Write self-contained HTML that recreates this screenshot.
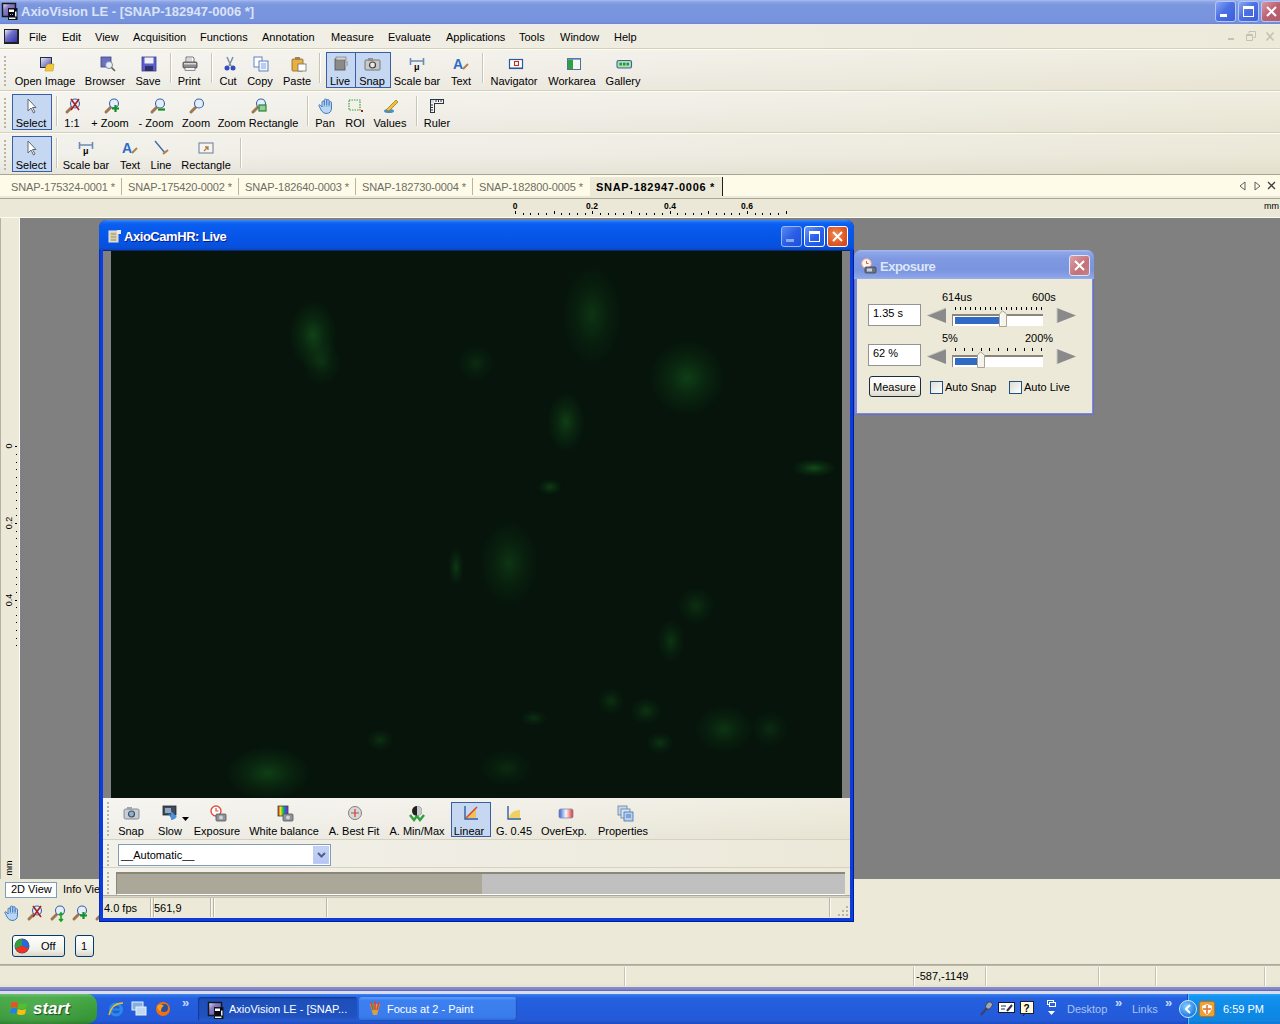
<!DOCTYPE html><html><head><meta charset="utf-8"><style>
*{margin:0;padding:0;box-sizing:border-box}
html,body{width:1280px;height:1024px;overflow:hidden;background:#ece9d8;font-family:"Liberation Sans",sans-serif;font-size:11px;color:#000;position:relative}
.a{position:absolute}
.t{position:absolute;white-space:nowrap;line-height:13px}
.lbl{position:absolute;white-space:nowrap;line-height:13px;text-align:center}
svg{position:absolute;overflow:visible}
#title{left:0;top:0;width:1280px;height:25px;background:linear-gradient(#a6bbee 0px,#8aa3e4 2px,#7b96df 5px,#7995df 60%,#7792dc 88%,#6f84c8 24px,#e6ebfa 24px)}
#menubar{left:0;top:25px;width:1280px;height:24px;background:linear-gradient(90deg,#f2f1ea,#efede2 45%,#edeada);border-bottom:1px solid #d4d0bf}
.tb{left:0;width:1280px;background:linear-gradient(rgba(255,255,255,.2),rgba(255,255,255,0) 50%,rgba(110,100,50,.04)),linear-gradient(90deg,#f3f2ed,#f0eee6 45%,#ece9d9);border-top:1px solid #fdfdf0;border-bottom:1px solid #d4d0bf}
.grip{position:absolute;left:4px;width:2px;background:repeating-linear-gradient(#b9b59f 0 2px,transparent 2px 4px)}
.sep{position:absolute;width:2px;border-left:1px solid #c9c5b3;border-right:1px solid #fff}
.pr{position:absolute;background:#c5d7f1;border:1px solid #3a5ea4}
</style></head><body>
<div id="title" class="a">
<svg style="left:1px;top:2px" width="17" height="18" viewBox="0 0 17 18"><defs><linearGradient id="tg" x1="0" y1="0" x2="1" y2="1"><stop offset="0" stop-color="#f0f0ff"/><stop offset=".35" stop-color="#8a7cc0"/><stop offset="1" stop-color="#5a48a8"/></linearGradient></defs><rect x="1.5" y="1.5" width="13" height="13" fill="url(#tg)" stroke="#101820" stroke-width="1.5"/><rect x="7.5" y="6.5" width="8.5" height="11" fill="#0a0a14" stroke="#101820"/><rect x="8" y="7.5" width="5" height="2.5" fill="#fff"/><rect x="8" y="15.5" width="6.5" height="1.5" fill="#f0f0e0"/><rect x="14" y="9.5" width="1.5" height="5" fill="#f0f0f0"/><path d="M9 12.5h1M11 12.5h1" stroke="#a0a8c0" stroke-width="1"/></svg>
<div class="t" style="left:21px;top:5px;font-weight:bold;font-size:13px;color:#d9e3f8">AxioVision LE - [SNAP-182947-0006 *]</div>
<div class="a" style="left:1215px;top:1px;width:21px;height:21px;border:1px solid #b4c6f4;border-radius:3px;background:linear-gradient(135deg,#8aa6f2,#4c70e4 45%,#3c5fd9)"></div>
<div class="a" style="left:1238px;top:1px;width:21px;height:21px;border:1px solid #b4c6f4;border-radius:3px;background:linear-gradient(135deg,#8aa6f2,#4c70e4 45%,#3c5fd9)"></div>
<div class="a" style="left:1261px;top:1px;width:21px;height:21px;border:1px solid #b4c6f4;border-radius:3px;background:linear-gradient(135deg,#d896a4,#bc6070 50%,#b45a6c)"></div>
<div class="a" style="left:1220px;top:14px;width:7px;height:3px;background:#fff"></div>
<div class="a" style="left:1243px;top:6px;width:11px;height:11px;border:1px solid #fff;border-top-width:3px"></div>
<svg style="left:1265px;top:5px" width="15" height="15"><path d="M2 2 L11 11 M11 2 L2 11" stroke="#fff" stroke-width="2"/></svg>
</div>
<div id="menubar" class="a">
<div class="a" style="left:4px;top:4px;width:15px;height:15px;border:1px solid #202020;border-right-width:2px;border-bottom-width:2px;background:linear-gradient(135deg,#e8e8f8,#7070c8 40%,#3030a8)"></div>
<div class="t" style="left:29px;top:6px">File</div>
<div class="t" style="left:62px;top:6px">Edit</div>
<div class="t" style="left:95px;top:6px">View</div>
<div class="t" style="left:133px;top:6px">Acquisition</div>
<div class="t" style="left:200px;top:6px">Functions</div>
<div class="t" style="left:262px;top:6px">Annotation</div>
<div class="t" style="left:331px;top:6px">Measure</div>
<div class="t" style="left:388px;top:6px">Evaluate</div>
<div class="t" style="left:446px;top:6px">Applications</div>
<div class="t" style="left:519px;top:6px">Tools</div>
<div class="t" style="left:560px;top:6px">Window</div>
<div class="t" style="left:614px;top:6px">Help</div>
<div class="a" style="left:1228px;top:13px;width:6px;height:2px;background:#c4c2b6"></div>
<svg style="left:1246px;top:6px" width="10" height="10"><path d="M3 2.5 V0.5 H9.5 V6.5 H7.5 M0.5 3.5 H6.5 V9.5 H0.5 Z M0.5 4.5 H6.5" stroke="#c4c2b6" stroke-width="1" fill="none"/></svg>
<svg style="left:1266px;top:7px" width="8" height="9"><path d="M0.5 0.5 L7.5 8.5 M7.5 0.5 L0.5 8.5" stroke="#c4c2b6" stroke-width="1.6"/></svg>
</div>
<div class="a tb" style="top:49px;height:42px"><div class="grip" style="top:6px;height:32px"></div></div>
<div class="a tb" style="top:91px;height:42px"><div class="grip" style="top:6px;height:32px"></div></div>
<div class="a tb" style="top:133px;height:41px;border-bottom:none;background:linear-gradient(rgba(255,255,255,.1),rgba(255,255,255,0) 50%,rgba(110,100,50,.07)),linear-gradient(90deg,#f1f0ea,#efede4 45%,#ebe8d8)"><div class="grip" style="top:6px;height:32px"></div></div>
<svg width="0" height="0" style="position:absolute"><defs><linearGradient id="gp" x1="0" y1="0" x2="1" y2="1"><stop offset="0" stop-color="#e8e8f8"/><stop offset="1" stop-color="#4848a8"/></linearGradient></defs></svg>
<svg style="left:39px;top:56px" width="16" height="16" viewBox="0 0 16 16"><rect x="1" y="1" width="12" height="11" fill="#2a2a40"/><rect x="2" y="2" width="10" height="9" fill="url(#gp)"/><path d="M7 10 L9 8 L15 8 L14 15 L6 15 Z" fill="#f2c83a" stroke="#c99a20" stroke-width="0.6"/></svg>
<div class="lbl" style="left:-15px;top:75px;width:120px;">Open Image</div>
<svg style="left:100px;top:56px" width="16" height="16" viewBox="0 0 16 16"><rect x="1" y="1" width="10" height="10" fill="#6a70c0" stroke="#404080" stroke-width="0.8"/><circle cx="9" cy="9" r="3.5" fill="#e6eef8" stroke="#7a8aa8" stroke-width="1"/><line x1="11.5" y1="11.5" x2="15" y2="15" stroke="#6a5a4a" stroke-width="1.6"/></svg>
<div class="lbl" style="left:45px;top:75px;width:120px;">Browser</div>
<svg style="left:141px;top:56px" width="16" height="16" viewBox="0 0 16 16"><rect x="1" y="1" width="14" height="14" fill="#5a5ec8" stroke="#3a3a90" stroke-width="0.8"/><rect x="3.5" y="1.5" width="9" height="6" fill="#f0f0f8"/><rect x="4" y="10" width="8" height="5" fill="#30306a"/></svg>
<div class="lbl" style="left:88px;top:75px;width:120px;">Save</div>
<svg style="left:182px;top:56px" width="16" height="16" viewBox="0 0 16 16"><path d="M4 1 H11 L12 2 V7 H4 Z" fill="#fff" stroke="#505050" stroke-width="0.8"/><path d="M5 3h5M5 5h5" stroke="#9090a0" stroke-width="0.7"/><rect x="1" y="6" width="14" height="6" rx="1" fill="#8c8c8c" stroke="#3c3c3c" stroke-width="0.8"/><rect x="2" y="7" width="12" height="1.5" fill="#d8d8d8"/><rect x="3" y="11.5" width="10" height="3" fill="#f0f0f0" stroke="#505050" stroke-width="0.6"/></svg>
<div class="lbl" style="left:129px;top:75px;width:120px;">Print</div>
<svg style="left:222px;top:56px" width="16" height="16" viewBox="0 0 16 16"><path d="M5 1 L9 10 M11 1 L7 10" stroke="#8090a0" stroke-width="1.5"/><circle cx="5" cy="12" r="2.5" fill="#3050c0"/><circle cx="11" cy="12" r="2.5" fill="#3050c0"/></svg>
<div class="lbl" style="left:168px;top:75px;width:120px;">Cut</div>
<svg style="left:253px;top:56px" width="16" height="16" viewBox="0 0 16 16"><rect x="1" y="1" width="8" height="10" fill="#fff" stroke="#5078b8" stroke-width="0.9"/><rect x="6" y="5" width="9" height="10" fill="#f0f4ff" stroke="#5078b8" stroke-width="0.9"/><path d="M8 8h5M8 10h5M8 12h5" stroke="#7090c8" stroke-width="0.8"/></svg>
<div class="lbl" style="left:200px;top:75px;width:120px;">Copy</div>
<svg style="left:291px;top:56px" width="16" height="16" viewBox="0 0 16 16"><rect x="1" y="3" width="11" height="12" rx="1" fill="#e8b040" stroke="#906020" stroke-width="0.8"/><rect x="4" y="1" width="5" height="3" fill="#a08060"/><rect x="7" y="8" width="8" height="7" fill="#fff" stroke="#707070" stroke-width="0.8"/></svg>
<div class="lbl" style="left:237px;top:75px;width:120px;">Paste</div>
<div class="sep" style="left:170px;top:53px;height:30px"></div>
<div class="sep" style="left:211px;top:53px;height:30px"></div>
<div class="sep" style="left:319px;top:53px;height:30px"></div>
<div class="pr" style="left:326px;top:52px;width:30px;height:36px"></div>
<div class="pr" style="left:355px;top:52px;width:36px;height:36px"></div>
<svg style="left:333px;top:56px" width="16" height="16" viewBox="0 0 16 16"><rect x="2" y="3" width="10" height="11" fill="#8a8a8a" stroke="#505050" stroke-width="0.8"/><rect x="3" y="1" width="10" height="3" fill="#d0d0d0" stroke="#707070" stroke-width="0.6"/><rect x="12" y="5" width="3" height="5" fill="#b0b0b0"/></svg>
<div class="lbl" style="left:280px;top:75px;width:120px;">Live</div>
<svg style="left:364px;top:56px" width="16" height="16" viewBox="0 0 16 16"><rect x="1" y="4" width="15" height="10" rx="1" fill="#c8c8c8" stroke="#606060" stroke-width="0.8"/><rect x="4" y="2" width="5" height="3" fill="#909090"/><circle cx="8.5" cy="9" r="3" fill="#e8e8e8" stroke="#404040" stroke-width="1.2"/></svg>
<div class="lbl" style="left:312px;top:75px;width:120px;">Snap</div>
<svg style="left:409px;top:56px" width="16" height="16" viewBox="0 0 16 16"><path d="M1.5 2 V9 M14.5 2 V9 M1.5 5 H14.5" stroke="#6a8ab8" stroke-width="1.6"/><text x="5" y="13.5" font-size="9" font-weight="bold" font-family="Liberation Sans" fill="#000">μ</text></svg>
<div class="lbl" style="left:357px;top:75px;width:120px;">Scale bar</div>
<svg style="left:453px;top:56px" width="16" height="16" viewBox="0 0 16 16"><text x="0" y="13" font-size="14" font-weight="bold" font-family="Liberation Sans" fill="#2c6cc8">A</text><line x1="10" y1="13" x2="15" y2="8" stroke="#b08050" stroke-width="2"/></svg>
<div class="lbl" style="left:401px;top:75px;width:120px;">Text</div>
<div class="sep" style="left:482px;top:53px;height:30px"></div>
<svg style="left:508px;top:56px" width="16" height="16" viewBox="0 0 16 16"><rect x="1.5" y="3.5" width="13" height="9" fill="#fff" stroke="#2a5aa0" stroke-width="1.2"/><rect x="1" y="11.5" width="14" height="1.5" fill="#2a5aa0"/><rect x="6.5" y="5.5" width="4" height="4" fill="none" stroke="#c03020" stroke-width="1.1"/></svg>
<div class="lbl" style="left:454px;top:75px;width:120px;">Navigator</div>
<svg style="left:566px;top:56px" width="16" height="16" viewBox="0 0 16 16"><rect x="1.5" y="2.5" width="13" height="11" fill="#f4f4f4" stroke="#50709c" stroke-width="1"/><rect x="1" y="2" width="14" height="1.6" fill="#4a78b8"/><rect x="2" y="3.5" width="5" height="9.5" fill="#30a040"/></svg>
<div class="lbl" style="left:512px;top:75px;width:120px;">Workarea</div>
<svg style="left:616px;top:56px" width="16" height="16" viewBox="0 0 16 16"><rect x="1" y="4.5" width="14.5" height="7.5" rx="1.5" fill="#a8e0a8" stroke="#3a64a8" stroke-width="1.1"/><rect x="3.5" y="6.8" width="2.4" height="2.6" fill="#2a8a3a"/><rect x="7" y="6.8" width="2.4" height="2.6" fill="#2a8a3a"/><rect x="10.5" y="6.8" width="2.4" height="2.6" fill="#2a8a3a"/></svg>
<div class="lbl" style="left:563px;top:75px;width:120px;">Gallery</div>
<div class="pr" style="left:12px;top:94px;width:40px;height:36px"></div>
<svg style="left:24px;top:98px" width="16" height="16" viewBox="0 0 16 16"><path d="M4 1 L4 13 L7 10 L9.5 15 L11 14 L8.5 9.5 L12 9.5 Z" fill="#fff" stroke="#606870" stroke-width="1"/></svg>
<div class="lbl" style="left:-29px;top:117px;width:120px;">Select</div>
<div class="sep" style="left:56px;top:96px;height:30px"></div>
<svg style="left:65px;top:98px" width="16" height="16" viewBox="0 0 16 16"><line x1="2" y1="14" x2="7" y2="9" stroke="#a07850" stroke-width="3" stroke-linecap="round"/><circle cx="10" cy="5.5" r="4.5" fill="#e4eef8" stroke="#3a64a8" stroke-width="1.1"/><path d="M6 1 L14 12 M14 1 L6 12" stroke="#a82020" stroke-width="1.6"/></svg>
<div class="lbl" style="left:12px;top:117px;width:120px;">1:1</div>
<svg style="left:104px;top:98px" width="16" height="16" viewBox="0 0 16 16"><line x1="2" y1="14" x2="7" y2="9" stroke="#a07850" stroke-width="3" stroke-linecap="round"/><circle cx="10" cy="5.5" r="4.5" fill="#e4eef8" stroke="#3a64a8" stroke-width="1.1"/><path d="M11.5 7 V14 M8 10.5 H15" stroke="#109020" stroke-width="2.2"/></svg>
<div class="lbl" style="left:50px;top:117px;width:120px;">+ Zoom</div>
<svg style="left:150px;top:98px" width="16" height="16" viewBox="0 0 16 16"><line x1="2" y1="14" x2="7" y2="9" stroke="#a07850" stroke-width="3" stroke-linecap="round"/><circle cx="10" cy="5.5" r="4.5" fill="#e4eef8" stroke="#3a64a8" stroke-width="1.1"/><path d="M8 11.5 H15" stroke="#109020" stroke-width="2.2"/></svg>
<div class="lbl" style="left:96px;top:117px;width:120px;">- Zoom</div>
<svg style="left:189px;top:98px" width="16" height="16" viewBox="0 0 16 16"><line x1="2" y1="14" x2="7" y2="9" stroke="#a07850" stroke-width="3" stroke-linecap="round"/><circle cx="10" cy="5.5" r="4.5" fill="#e4eef8" stroke="#3a64a8" stroke-width="1.1"/></svg>
<div class="lbl" style="left:136px;top:117px;width:120px;">Zoom</div>
<svg style="left:251px;top:98px" width="16" height="16" viewBox="0 0 16 16"><line x1="2" y1="14" x2="7" y2="9" stroke="#a07850" stroke-width="3" stroke-linecap="round"/><circle cx="10" cy="5.5" r="4.5" fill="#e4eef8" stroke="#3a64a8" stroke-width="1.1"/><rect x="8" y="7" width="7" height="6" fill="#90d090" stroke="#308040" stroke-width="1.2"/></svg>
<div class="lbl" style="left:198px;top:117px;width:120px;">Zoom Rectangle</div>
<svg style="left:318px;top:98px" width="16" height="16" viewBox="0 0 16 16"><g fill="#b8d6f6" stroke="#3c70b8" stroke-width="0.9"><rect x="4" y="3" width="2.4" height="8" rx="1.2"/><rect x="6.4" y="1" width="2.4" height="9" rx="1.2"/><rect x="8.8" y="1.6" width="2.4" height="9" rx="1.2"/><rect x="11.2" y="3.6" width="2.3" height="7" rx="1.15"/><path d="M4.2 9 L2.2 7 Q1 6.2 0.8 7.4 L3 12 Q5 15.5 8 15.5 Q13.5 15.5 13.5 10 V8.5 L4.2 8.5 Z"/></g><path d="M4.6 8.2 H13" stroke="#b8d6f6" stroke-width="1.2"/></svg>
<div class="lbl" style="left:265px;top:117px;width:120px;">Pan</div>
<svg style="left:348px;top:98px" width="16" height="16" viewBox="0 0 16 16"><rect x="1" y="2" width="11" height="10" fill="none" stroke="#40a040" stroke-width="1.2" stroke-dasharray="1.5 1"/><rect x="13" y="12" width="2" height="2" fill="#a01818"/></svg>
<div class="lbl" style="left:295px;top:117px;width:120px;">ROI</div>
<svg style="left:383px;top:98px" width="16" height="16" viewBox="0 0 16 16"><ellipse cx="6" cy="13" rx="5" ry="2" fill="#4a90c8"/><path d="M3 12 L13 2 L15 4 L6 13 Z" fill="#f0c040" stroke="#a07820" stroke-width="0.8"/></svg>
<div class="lbl" style="left:330px;top:117px;width:120px;">Values</div>
<svg style="left:429px;top:98px" width="16" height="16" viewBox="0 0 16 16"><path d="M1 1 H15 V6 H6 V15 H1 Z" fill="#2c343c"/><path d="M2 2 H14 V5 H5 V14 H2 Z" fill="#f4f4f4"/><path d="M7 2v2M9.5 2v2M12 2v2M2 7h2M2 9.5h2M2 12h2" stroke="#2c343c" stroke-width="1"/><rect x="2" y="2" width="3" height="3" fill="#d8dce0"/></svg>
<div class="lbl" style="left:377px;top:117px;width:120px;">Ruler</div>
<div class="sep" style="left:307px;top:96px;height:30px"></div>
<div class="sep" style="left:416px;top:96px;height:30px"></div>
<div class="pr" style="left:12px;top:136px;width:40px;height:36px"></div>
<svg style="left:24px;top:140px" width="16" height="16" viewBox="0 0 16 16"><path d="M4 1 L4 13 L7 10 L9.5 15 L11 14 L8.5 9.5 L12 9.5 Z" fill="#fff" stroke="#606870" stroke-width="1"/></svg>
<div class="lbl" style="left:-29px;top:159px;width:120px;">Select</div>
<div class="sep" style="left:56px;top:138px;height:30px"></div>
<svg style="left:78px;top:140px" width="16" height="16" viewBox="0 0 16 16"><path d="M1.5 2 V9 M14.5 2 V9 M1.5 5 H14.5" stroke="#6a8ab8" stroke-width="1.6"/><text x="5" y="13.5" font-size="9" font-weight="bold" font-family="Liberation Sans" fill="#000">μ</text></svg>
<div class="lbl" style="left:26px;top:159px;width:120px;">Scale bar</div>
<svg style="left:122px;top:140px" width="16" height="16" viewBox="0 0 16 16"><text x="0" y="13" font-size="14" font-weight="bold" font-family="Liberation Sans" fill="#2c6cc8">A</text><line x1="10" y1="13" x2="15" y2="8" stroke="#b08050" stroke-width="2"/></svg>
<div class="lbl" style="left:70px;top:159px;width:120px;">Text</div>
<svg style="left:153px;top:140px" width="16" height="16" viewBox="0 0 16 16"><line x1="2" y1="1" x2="12" y2="13" stroke="#3c64a8" stroke-width="1.3"/><line x1="10" y1="14" x2="15" y2="10" stroke="#b08050" stroke-width="2.2"/></svg>
<div class="lbl" style="left:101px;top:159px;width:120px;">Line</div>
<svg style="left:198px;top:140px" width="16" height="16" viewBox="0 0 16 16"><rect x="1" y="3" width="14" height="10" fill="#f4f4f4" stroke="#8090a0" stroke-width="1.2"/><path d="M6 11 L10 7 M7 7 H10 V10" stroke="#b08040" stroke-width="1.3" fill="none"/></svg>
<div class="lbl" style="left:146px;top:159px;width:120px;">Rectangle</div>
<div class="sep" style="left:240px;top:138px;height:30px"></div>
<div class="a" style="left:0;top:174px;width:1280px;height:25px;background:linear-gradient(#fefbe9 85%,#fbf9ee 85%,#fbf9ee 92%,#ece9d9 92%);border-top:1px solid #a8a594;border-bottom:1px solid #aaa792"></div>
<div class="t" style="left:11px;top:181px;color:#6e6d64;letter-spacing:-0.1px">SNAP-175324-0001 *</div>
<div class="t" style="left:128px;top:181px;color:#6e6d64;letter-spacing:-0.1px">SNAP-175420-0002 *</div>
<div class="t" style="left:245px;top:181px;color:#6e6d64;letter-spacing:-0.1px">SNAP-182640-0003 *</div>
<div class="t" style="left:362px;top:181px;color:#6e6d64;letter-spacing:-0.1px">SNAP-182730-0004 *</div>
<div class="t" style="left:479px;top:181px;color:#6e6d64;letter-spacing:-0.1px">SNAP-182800-0005 *</div>
<div class="a" style="left:121px;top:178px;width:1px;height:17px;background:#b8b5a6"></div>
<div class="a" style="left:238px;top:178px;width:1px;height:17px;background:#b8b5a6"></div>
<div class="a" style="left:355px;top:178px;width:1px;height:17px;background:#b8b5a6"></div>
<div class="a" style="left:472px;top:178px;width:1px;height:17px;background:#b8b5a6"></div>
<div class="a" style="left:590px;top:177px;width:132px;height:21px;background:#ece9d8"></div>
<div class="t" style="left:596px;top:181px;font-weight:bold;letter-spacing:0.7px">SNAP-182947-0006 *</div>
<div class="a" style="left:722px;top:177px;width:1px;height:19px;background:#202020"></div>
<svg style="left:1239px;top:181px" width="8" height="10"><path d="M6 1 L1 5 L6 9 Z" fill="none" stroke="#606060" stroke-width="1"/></svg>
<svg style="left:1254px;top:181px" width="8" height="10"><path d="M1 1 L6 5 L1 9 Z" fill="none" stroke="#606060" stroke-width="1"/></svg>
<svg style="left:1267px;top:181px" width="9" height="9"><path d="M1 1 L8 8 M8 1 L1 8" stroke="#404040" stroke-width="1.3"/></svg>
<div class="a" style="left:0;top:199px;width:1280px;height:19px;background:#ebe8d8;border-bottom:1px solid #fdfcf4"></div>
<div class="a" style="left:515px;top:211px;width:1px;height:3px;background:#000"></div><div class="a" style="left:523px;top:213px;width:1px;height:2px;background:#000"></div><div class="a" style="left:530px;top:213px;width:1px;height:2px;background:#000"></div><div class="a" style="left:538px;top:213px;width:1px;height:2px;background:#000"></div><div class="a" style="left:546px;top:213px;width:1px;height:2px;background:#000"></div><div class="a" style="left:554px;top:211px;width:1px;height:3px;background:#000"></div><div class="a" style="left:561px;top:213px;width:1px;height:2px;background:#000"></div><div class="a" style="left:569px;top:213px;width:1px;height:2px;background:#000"></div><div class="a" style="left:577px;top:213px;width:1px;height:2px;background:#000"></div><div class="a" style="left:585px;top:213px;width:1px;height:2px;background:#000"></div><div class="a" style="left:592px;top:211px;width:1px;height:3px;background:#000"></div><div class="a" style="left:600px;top:213px;width:1px;height:2px;background:#000"></div><div class="a" style="left:608px;top:213px;width:1px;height:2px;background:#000"></div><div class="a" style="left:615px;top:213px;width:1px;height:2px;background:#000"></div><div class="a" style="left:623px;top:213px;width:1px;height:2px;background:#000"></div><div class="a" style="left:631px;top:211px;width:1px;height:3px;background:#000"></div><div class="a" style="left:639px;top:213px;width:1px;height:2px;background:#000"></div><div class="a" style="left:646px;top:213px;width:1px;height:2px;background:#000"></div><div class="a" style="left:654px;top:213px;width:1px;height:2px;background:#000"></div><div class="a" style="left:662px;top:213px;width:1px;height:2px;background:#000"></div><div class="a" style="left:670px;top:211px;width:1px;height:3px;background:#000"></div><div class="a" style="left:677px;top:213px;width:1px;height:2px;background:#000"></div><div class="a" style="left:685px;top:213px;width:1px;height:2px;background:#000"></div><div class="a" style="left:693px;top:213px;width:1px;height:2px;background:#000"></div><div class="a" style="left:701px;top:213px;width:1px;height:2px;background:#000"></div><div class="a" style="left:708px;top:211px;width:1px;height:3px;background:#000"></div><div class="a" style="left:716px;top:213px;width:1px;height:2px;background:#000"></div><div class="a" style="left:724px;top:213px;width:1px;height:2px;background:#000"></div><div class="a" style="left:731px;top:213px;width:1px;height:2px;background:#000"></div><div class="a" style="left:739px;top:213px;width:1px;height:2px;background:#000"></div><div class="a" style="left:747px;top:211px;width:1px;height:3px;background:#000"></div><div class="a" style="left:755px;top:213px;width:1px;height:2px;background:#000"></div><div class="a" style="left:762px;top:213px;width:1px;height:2px;background:#000"></div><div class="a" style="left:770px;top:213px;width:1px;height:2px;background:#000"></div><div class="a" style="left:778px;top:213px;width:1px;height:2px;background:#000"></div><div class="a" style="left:786px;top:211px;width:1px;height:3px;background:#000"></div>
<div class="t" style="left:495px;width:40px;text-align:center;top:202px;font-size:8.5px;font-weight:bold;line-height:9px">0</div>
<div class="t" style="left:572px;width:40px;text-align:center;top:202px;font-size:8.5px;font-weight:bold;line-height:9px">0.2</div>
<div class="t" style="left:650px;width:40px;text-align:center;top:202px;font-size:8.5px;font-weight:bold;line-height:9px">0.4</div>
<div class="t" style="left:727px;width:40px;text-align:center;top:202px;font-size:8.5px;font-weight:bold;line-height:9px">0.6</div>
<div class="t" style="left:1264px;top:201px;font-size:9px;line-height:10px">mm</div>
<div class="a" style="left:20px;top:218px;width:1260px;height:661px;background:#808080"></div>
<div class="a" style="left:0;top:218px;width:20px;height:661px;background:#ece9d8;border-left:1px solid #b4b1a2;border-right:1px solid #fdfcf4"></div>
<div class="a" style="left:15px;top:446px;width:2px;height:1px;background:#000"></div><div class="a" style="left:16px;top:454px;width:1px;height:1px;background:#000"></div><div class="a" style="left:16px;top:462px;width:1px;height:1px;background:#000"></div><div class="a" style="left:16px;top:469px;width:1px;height:1px;background:#000"></div><div class="a" style="left:16px;top:477px;width:1px;height:1px;background:#000"></div><div class="a" style="left:16px;top:485px;width:1px;height:1px;background:#000"></div><div class="a" style="left:16px;top:492px;width:1px;height:1px;background:#000"></div><div class="a" style="left:16px;top:500px;width:1px;height:1px;background:#000"></div><div class="a" style="left:16px;top:508px;width:1px;height:1px;background:#000"></div><div class="a" style="left:16px;top:515px;width:1px;height:1px;background:#000"></div><div class="a" style="left:15px;top:523px;width:2px;height:1px;background:#000"></div><div class="a" style="left:16px;top:531px;width:1px;height:1px;background:#000"></div><div class="a" style="left:16px;top:538px;width:1px;height:1px;background:#000"></div><div class="a" style="left:16px;top:546px;width:1px;height:1px;background:#000"></div><div class="a" style="left:16px;top:554px;width:1px;height:1px;background:#000"></div><div class="a" style="left:16px;top:561px;width:1px;height:1px;background:#000"></div><div class="a" style="left:16px;top:569px;width:1px;height:1px;background:#000"></div><div class="a" style="left:16px;top:577px;width:1px;height:1px;background:#000"></div><div class="a" style="left:16px;top:584px;width:1px;height:1px;background:#000"></div><div class="a" style="left:16px;top:592px;width:1px;height:1px;background:#000"></div><div class="a" style="left:15px;top:600px;width:2px;height:1px;background:#000"></div><div class="a" style="left:16px;top:607px;width:1px;height:1px;background:#000"></div><div class="a" style="left:16px;top:615px;width:1px;height:1px;background:#000"></div><div class="a" style="left:16px;top:622px;width:1px;height:1px;background:#000"></div><div class="a" style="left:16px;top:630px;width:1px;height:1px;background:#000"></div><div class="a" style="left:16px;top:638px;width:1px;height:1px;background:#000"></div><div class="a" style="left:16px;top:645px;width:1px;height:1px;background:#000"></div>
<div class="t" style="left:-11px;top:441px;width:40px;text-align:center;font-size:9px;line-height:10px;transform:rotate(-90deg)">0</div>
<div class="t" style="left:-11px;top:518px;width:40px;text-align:center;font-size:9px;line-height:10px;transform:rotate(-90deg)">0.2</div>
<div class="t" style="left:-11px;top:595px;width:40px;text-align:center;font-size:9px;line-height:10px;transform:rotate(-90deg)">0.4</div>
<div class="t" style="left:-11px;top:863px;width:40px;text-align:center;font-size:9px;line-height:10px;transform:rotate(-90deg)">mm</div>
<div class="a" style="left:5px;top:882px;width:52px;height:16px;background:#fff;border:1px solid #7f9db9"></div>
<div class="t" style="left:11px;top:883px">2D View</div>
<div class="t" style="left:63px;top:883px">Info View</div>
<svg style="left:4px;top:905px" width="16" height="16" viewBox="0 0 16 16"><g fill="#b8d6f6" stroke="#3c70b8" stroke-width="0.9"><rect x="4" y="3" width="2.4" height="8" rx="1.2"/><rect x="6.4" y="1" width="2.4" height="9" rx="1.2"/><rect x="8.8" y="1.6" width="2.4" height="9" rx="1.2"/><rect x="11.2" y="3.6" width="2.3" height="7" rx="1.15"/><path d="M4.2 9 L2.2 7 Q1 6.2 0.8 7.4 L3 12 Q5 15.5 8 15.5 Q13.5 15.5 13.5 10 V8.5 L4.2 8.5 Z"/></g><path d="M4.6 8.2 H13" stroke="#b8d6f6" stroke-width="1.2"/></svg>
<svg style="left:27px;top:905px" width="16" height="16" viewBox="0 0 16 16"><line x1="2" y1="14" x2="7" y2="9" stroke="#a07850" stroke-width="3" stroke-linecap="round"/><circle cx="10" cy="5.5" r="4.5" fill="#e4eef8" stroke="#3a64a8" stroke-width="1.1"/><path d="M6 1 L14 12 M14 1 L6 12" stroke="#a82020" stroke-width="1.6"/></svg>
<svg style="left:50px;top:905px" width="16" height="16" viewBox="0 0 16 16"><line x1="2" y1="14" x2="7" y2="9" stroke="#a07850" stroke-width="3" stroke-linecap="round"/><circle cx="10" cy="5.5" r="4.5" fill="#e4eef8" stroke="#3a64a8" stroke-width="1.1"/><path d="M11 8 V16 M9 10 L11 8 L13 10 M9 14 L11 16 L13 14" stroke="#18a028" stroke-width="1.6" fill="none"/></svg>
<svg style="left:72px;top:905px" width="16" height="16" viewBox="0 0 16 16"><line x1="2" y1="14" x2="7" y2="9" stroke="#a07850" stroke-width="3" stroke-linecap="round"/><circle cx="10" cy="5.5" r="4.5" fill="#e4eef8" stroke="#3a64a8" stroke-width="1.1"/><path d="M11.5 7 V14 M8 10.5 H15" stroke="#109020" stroke-width="2.2"/></svg>
<svg style="left:95px;top:905px" width="16" height="16" viewBox="0 0 16 16"><line x1="2" y1="14" x2="7" y2="9" stroke="#a07850" stroke-width="3" stroke-linecap="round"/><circle cx="10" cy="5.5" r="4.5" fill="#e4eef8" stroke="#3a64a8" stroke-width="1.1"/></svg>
<div class="a" style="left:12px;top:935px;width:53px;height:22px;border:1px solid #003c74;border-radius:3px;background:linear-gradient(#fff,#f0f0ea 70%,#d8d5c8)"></div>
<svg style="left:14px;top:938px" width="16" height="16" viewBox="0 0 16 16"><circle cx="8" cy="8" r="7.5" fill="#505050"/><path d="M8 8 L8 1 A7 7 0 0 0 1.5 10.5 Z" fill="#30a040"/><path d="M8 8 L8 1 A7 7 0 0 1 14.5 10.5 Z" fill="#2868d8"/><path d="M8 8 L14.5 10.5 A7 7 0 0 1 1.5 10.5 Z" fill="#f03020"/></svg>
<div class="t" style="left:41px;top:940px">Off</div>
<div class="a" style="left:75px;top:935px;width:19px;height:22px;border:1px solid #003c74;border-radius:3px;background:linear-gradient(#fff,#f0f0ea 70%,#d8d5c8)"></div>
<div class="t" style="left:81px;top:940px">1</div>
<div class="a" style="left:99px;top:220px;width:755px;height:702px;background:#0b3ce0;border-radius:8px 8px 0 0;border:1px solid #0a2cb0;border-right-color:#001c98;border-bottom-color:#001c98;border-top:none"></div>
<div class="a" style="left:99px;top:220px;width:755px;height:30px;border-radius:8px 8px 0 0;background:linear-gradient(#3e8dfb 0%,#1d70f4 6%,#0a5ef0 14%,#0758eb 40%,#0653e3 75%,#0a4fd8 92%,#0845c4 100%)"></div>
<svg style="left:108px;top:229px" width="14" height="14" viewBox="0 0 14 14"><rect x="1" y="2" width="9" height="11" fill="#d8d0b0" stroke="#e8e8f0" stroke-width="1"/><path d="M3 5h5M3 8h5M3 11h5" stroke="#9a9070" stroke-width="1"/><rect x="9" y="1" width="4" height="4" fill="#e8e8f0"/></svg>
<div class="t" style="left:124px;top:230px;font-weight:bold;font-size:13px;color:#fff;letter-spacing:-0.45px;text-shadow:1px 1px 0 #0a1e8a">AxioCamHR: Live</div>
<div class="a" style="left:781px;top:226px;width:21px;height:21px;border:1px solid #9ab8f0;border-radius:3px;background:linear-gradient(135deg,#5a8af0,#2a5ee8 50%,#1e4ed8)"></div>
<div class="a" style="left:786px;top:239px;width:8px;height:3px;background:#8aa8e8"></div>
<div class="a" style="left:804px;top:226px;width:21px;height:21px;border:1px solid #fff;border-radius:3px;background:linear-gradient(135deg,#6a9af8,#2a62ee 50%,#1c54e0)"></div>
<div class="a" style="left:809px;top:231px;width:11px;height:11px;border:1px solid #fff;border-top:3px solid #fff"></div>
<div class="a" style="left:827px;top:226px;width:21px;height:21px;border:1px solid #fff;border-radius:3px;background:radial-gradient(circle at 40% 40%,#f0905a,#e05a28 55%,#c8401a)"></div>
<svg style="left:831px;top:230px" width="13" height="13"><path d="M2 2 L11 11 M11 2 L2 11" stroke="#fff" stroke-width="2"/></svg>
<div class="a" style="left:103px;top:250px;width:747px;height:668px;background:linear-gradient(90deg,#f2f1ea,#efede3 50%,#ece9d9)"></div>
<div class="a" style="left:103px;top:250px;width:747px;height:548px;background:#808080"></div>
<div class="a" style="left:111px;top:251px;width:731px;height:547px;background:radial-gradient(ellipse 24px 35px at 202px 84px,rgba(30,135,40,0.40),rgba(30,135,40,0.15) 50%,transparent),radial-gradient(ellipse 19px 24px at 211px 111px,rgba(30,135,40,0.24),rgba(30,135,40,0.09) 50%,transparent),radial-gradient(ellipse 30px 51px at 481px 64px,rgba(30,135,40,0.28),rgba(30,135,40,0.10) 50%,transparent),radial-gradient(ellipse 38px 38px at 576px 127px,rgba(30,135,40,0.36),rgba(30,135,40,0.14) 50%,transparent),radial-gradient(ellipse 19px 30px at 455px 171px,rgba(30,135,40,0.36),rgba(30,135,40,0.14) 50%,transparent),radial-gradient(ellipse 22px 9px at 703px 217px,rgba(30,135,40,0.48),rgba(30,135,40,0.18) 50%,transparent),radial-gradient(ellipse 12px 8px at 439px 236px,rgba(30,135,40,0.36),rgba(30,135,40,0.14) 50%,transparent),radial-gradient(ellipse 19px 19px at 365px 112px,rgba(30,135,40,0.20),rgba(30,135,40,0.07) 50%,transparent),radial-gradient(ellipse 30px 43px at 398px 312px,rgba(30,135,40,0.28),rgba(30,135,40,0.10) 50%,transparent),radial-gradient(ellipse 8px 19px at 345px 316px,rgba(30,135,40,0.32),rgba(30,135,40,0.12) 50%,transparent),radial-gradient(ellipse 19px 19px at 585px 355px,rgba(30,135,40,0.24),rgba(30,135,40,0.09) 50%,transparent),radial-gradient(ellipse 14px 22px at 560px 390px,rgba(30,135,40,0.28),rgba(30,135,40,0.10) 50%,transparent),radial-gradient(ellipse 14px 14px at 500px 450px,rgba(30,135,40,0.24),rgba(30,135,40,0.09) 50%,transparent),radial-gradient(ellipse 16px 14px at 535px 460px,rgba(30,135,40,0.28),rgba(30,135,40,0.10) 50%,transparent),radial-gradient(ellipse 30px 24px at 613px 478px,rgba(30,135,40,0.28),rgba(30,135,40,0.10) 50%,transparent),radial-gradient(ellipse 14px 11px at 549px 492px,rgba(30,135,40,0.28),rgba(30,135,40,0.10) 50%,transparent),radial-gradient(ellipse 14px 8px at 423px 467px,rgba(30,135,40,0.24),rgba(30,135,40,0.09) 50%,transparent),radial-gradient(ellipse 27px 19px at 395px 517px,rgba(30,135,40,0.20),rgba(30,135,40,0.07) 50%,transparent),radial-gradient(ellipse 43px 27px at 157px 522px,rgba(30,135,40,0.36),rgba(30,135,40,0.14) 50%,transparent),radial-gradient(ellipse 14px 11px at 269px 489px,rgba(30,135,40,0.24),rgba(30,135,40,0.09) 50%,transparent),radial-gradient(ellipse 19px 19px at 659px 478px,rgba(30,135,40,0.20),rgba(30,135,40,0.07) 50%,transparent),#06140b"></div>
<div class="a" style="left:103px;top:250px;width:747px;height:1px;background:#0a2a70"></div>
<div class="a" style="left:103px;top:798px;width:747px;height:42px;background:linear-gradient(rgba(255,255,255,.2),rgba(255,255,255,0) 50%,rgba(110,100,50,.04)),linear-gradient(90deg,#f3f2ed,#f0eee6 50%,#ece9d9);border-bottom:1px solid #d6d2bf"></div>
<div class="grip" style="left:107px;top:802px;height:34px"></div>
<div class="pr" style="left:451px;top:802px;width:40px;height:35px"></div>
<div class="lbl" style="left:71px;top:825px;width:120px;">Snap</div>
<div class="lbl" style="left:110px;top:825px;width:120px;">Slow</div>
<div class="lbl" style="left:157px;top:825px;width:120px;">Exposure</div>
<div class="lbl" style="left:224px;top:825px;width:120px;">White balance</div>
<div class="lbl" style="left:294px;top:825px;width:120px;">A. Best Fit</div>
<div class="lbl" style="left:357px;top:825px;width:120px;">A. Min/Max</div>
<div class="lbl" style="left:409px;top:825px;width:120px;">Linear</div>
<div class="lbl" style="left:454px;top:825px;width:120px;">G. 0.45</div>
<div class="lbl" style="left:504px;top:825px;width:120px;">OverExp.</div>
<div class="lbl" style="left:563px;top:825px;width:120px;">Properties</div>
<svg width="0" height="0" style="position:absolute"><defs><linearGradient id="rb" x1="0" y1="0" x2="1" y2="0"><stop offset="0" stop-color="#e02020"/><stop offset=".25" stop-color="#f0e020"/><stop offset=".5" stop-color="#20c040"/><stop offset=".75" stop-color="#2060e0"/><stop offset="1" stop-color="#a020c0"/></linearGradient><linearGradient id="ov" x1="0" y1="0" x2="1" y2="0"><stop offset="0" stop-color="#3060d0"/><stop offset=".5" stop-color="#f8f8f8"/><stop offset="1" stop-color="#e03030"/></linearGradient></defs></svg>
<svg style="left:123px;top:805px" width="16" height="16" viewBox="0 0 16 16"><rect x="1" y="4" width="15" height="10" rx="1.5" fill="#c8ccd4" stroke="#707880" stroke-width="0.8"/><rect x="4" y="2" width="5" height="3" fill="#a0a4ac"/><circle cx="8.5" cy="9" r="3" fill="#90b0d0" stroke="#405060" stroke-width="1.2"/></svg>
<svg style="left:162px;top:805px" width="16" height="16" viewBox="0 0 16 16"><rect x="1" y="1" width="13" height="9" fill="#404a58" stroke="#202830" stroke-width="0.8"/><rect x="3" y="3" width="6" height="5" fill="#90a8c0"/><path d="M6 8 L14 13 L10 15 Z" fill="#3a80d0"/><path d="M9 6 L15 12 L9 15 Z" fill="#4c90e0"/></svg>
<svg style="left:210px;top:805px" width="16" height="16" viewBox="0 0 16 16"><circle cx="6" cy="6" r="5" fill="#fff" stroke="#e05040" stroke-width="1.4"/><path d="M6 3 V6 H8.5" stroke="#e05040" stroke-width="1.2" fill="none"/><rect x="6" y="9" width="10" height="7" rx="1" fill="#909498" stroke="#505458" stroke-width="0.8"/><circle cx="11" cy="12.5" r="2" fill="#d0d4d8"/></svg>
<svg style="left:277px;top:805px" width="16" height="16" viewBox="0 0 16 16"><rect x="1" y="1" width="10" height="10" fill="url(#rb)" stroke="#404040" stroke-width="0.8"/><rect x="6" y="9" width="10" height="7" rx="1" fill="#909498" stroke="#505458" stroke-width="0.8"/><circle cx="11" cy="12.5" r="2" fill="#d0d4d8"/></svg>
<svg style="left:347px;top:805px" width="16" height="16" viewBox="0 0 16 16"><circle cx="8" cy="8" r="6.5" fill="#d8d8d8" stroke="#808080" stroke-width="1"/><path d="M4 8 H12 M8 4 V12" stroke="#d04040" stroke-width="1.2"/></svg>
<svg style="left:409px;top:805px" width="16" height="16" viewBox="0 0 16 16"><circle cx="8" cy="6" r="5" fill="#202020"/><path d="M8 1 A5 5 0 0 1 8 11 Z" fill="#c8c8c8"/><path d="M1 10 L5 15 L8 11 M15 10 L11 15 L8 11" stroke="#30a040" stroke-width="2.5" fill="none"/></svg>
<svg style="left:463px;top:805px" width="16" height="16" viewBox="0 0 16 16"><path d="M2 1 V14 H15" stroke="#3060a0" stroke-width="1.4" fill="none"/><path d="M3 13 L13 3 L13 13 Z" fill="#f0c060"/><line x1="3" y1="13" x2="14" y2="2" stroke="#e04020" stroke-width="1.5"/></svg>
<svg style="left:506px;top:805px" width="16" height="16" viewBox="0 0 16 16"><path d="M2 1 V14 H15" stroke="#3060a0" stroke-width="1.4" fill="none"/><path d="M3 13 Q5 5 14 5 V13 Z" fill="#f0d060"/></svg>
<svg style="left:558px;top:805px" width="16" height="16" viewBox="0 0 16 16"><rect x="1" y="4" width="14" height="9" rx="1.5" fill="url(#ov)" stroke="#8090a8" stroke-width="0.8"/></svg>
<svg style="left:617px;top:805px" width="16" height="16" viewBox="0 0 16 16"><rect x="1" y="1" width="9" height="9" fill="#c8d8e8" stroke="#6080a0" stroke-width="0.8"/><rect x="4" y="4" width="9" height="9" fill="#d8e4f0" stroke="#6080a0" stroke-width="0.8"/><rect x="7" y="7" width="9" height="9" fill="#b8d0f0" stroke="#4070b0" stroke-width="0.8"/><path d="M9 10h5M9 12h5" stroke="#3060a0" stroke-width="0.8"/></svg>
<svg style="left:182px;top:817px" width="7" height="4"><path d="M0 0 H7 L3.5 4 Z" fill="#000"/></svg>
<div class="grip" style="left:107px;top:844px;height:22px"></div>
<div class="a" style="left:103px;top:867px;width:747px;height:1px;background:#d6d2bf"></div>
<div class="a" style="left:118px;top:844px;width:213px;height:22px;background:#fff;border:1px solid #7f9db9"></div>
<div class="t" style="left:121px;top:849px">__Automatic__</div>
<div class="a" style="left:313px;top:846px;width:16px;height:18px;background:linear-gradient(#c6d3f7,#b4c6f5);border:1px solid #c0cdf0"></div>
<svg style="left:317px;top:852px" width="9" height="6"><path d="M1 1 L4.5 4.5 L8 1" stroke="#4d6185" stroke-width="2" fill="none"/></svg>
<div class="grip" style="left:107px;top:872px;height:22px"></div>
<div class="a" style="left:116px;top:872px;width:729px;height:23px;background:#c0c0c0;border-top:2px solid #8a8778;border-left:1px solid #8a8778;border-bottom:1px solid #fff"></div>
<div class="a" style="left:117px;top:874px;width:365px;height:20px;background:#aca899"></div>
<div class="a" style="left:103px;top:895px;width:747px;height:1px;background:#aca899"></div>
<div class="a" style="left:103px;top:896px;width:747px;height:22px;background:#ece9d8;border-top:1px solid #d8d5c6"></div>
<div class="a" style="left:103px;top:897px;width:747px;height:1px;background:#c9c6b6"></div>
<div class="a" style="left:150px;top:898px;width:1px;height:19px;background:#b9b6a6"></div>
<div class="a" style="left:151px;top:898px;width:1px;height:19px;background:#fafaf4"></div>
<div class="a" style="left:153px;top:898px;width:1px;height:19px;background:#b9b6a6"></div>
<div class="a" style="left:154px;top:898px;width:1px;height:19px;background:#fafaf4"></div>
<div class="a" style="left:210px;top:898px;width:1px;height:19px;background:#b9b6a6"></div>
<div class="a" style="left:211px;top:898px;width:1px;height:19px;background:#fafaf4"></div>
<div class="a" style="left:213px;top:898px;width:1px;height:19px;background:#b9b6a6"></div>
<div class="a" style="left:214px;top:898px;width:1px;height:19px;background:#fafaf4"></div>
<div class="a" style="left:326px;top:898px;width:1px;height:19px;background:#b9b6a6"></div>
<div class="a" style="left:327px;top:898px;width:1px;height:19px;background:#fafaf4"></div>
<div class="a" style="left:829px;top:898px;width:1px;height:19px;background:#b9b6a6"></div>
<div class="a" style="left:830px;top:898px;width:1px;height:19px;background:#fafaf4"></div>
<div class="t" style="left:104px;top:902px">4.0 fps</div>
<div class="t" style="left:154px;top:902px">561,9</div>
<svg style="left:838px;top:906px" width="11" height="11"><g fill="#b8b5a6"><rect x="8" y="0" width="2" height="2"/><rect x="4" y="4" width="2" height="2"/><rect x="8" y="4" width="2" height="2"/><rect x="0" y="8" width="2" height="2"/><rect x="4" y="8" width="2" height="2"/><rect x="8" y="8" width="2" height="2"/></g></svg>
<div class="a" style="left:0;top:964px;width:1280px;height:1px;background:#aca899"></div>
<div class="a" style="left:0;top:965px;width:1280px;height:1px;background:#bdbaa9"></div>
<div class="a" style="left:0;top:966px;width:1280px;height:21px;background:linear-gradient(#ece9d8 60%,#ebe9d4 85%,#e4e2d0)"></div>
<div class="a" style="left:624px;top:967px;width:1px;height:19px;background:#c5c2b2"></div>
<div class="a" style="left:625px;top:967px;width:1px;height:19px;background:#fff"></div>
<div class="a" style="left:913px;top:967px;width:1px;height:19px;background:#c5c2b2"></div>
<div class="a" style="left:914px;top:967px;width:1px;height:19px;background:#fff"></div>
<div class="a" style="left:985px;top:967px;width:1px;height:19px;background:#c5c2b2"></div>
<div class="a" style="left:986px;top:967px;width:1px;height:19px;background:#fff"></div>
<div class="a" style="left:1098px;top:967px;width:1px;height:19px;background:#c5c2b2"></div>
<div class="a" style="left:1099px;top:967px;width:1px;height:19px;background:#fff"></div>
<div class="a" style="left:1155px;top:967px;width:1px;height:19px;background:#c5c2b2"></div>
<div class="a" style="left:1156px;top:967px;width:1px;height:19px;background:#fff"></div>
<div class="a" style="left:1264px;top:967px;width:1px;height:19px;background:#c5c2b2"></div>
<div class="a" style="left:1265px;top:967px;width:1px;height:19px;background:#fff"></div>
<div class="t" style="left:916px;top:970px">-587,-1149</div>
<div class="a" style="left:0;top:987px;width:1280px;height:4px;background:linear-gradient(#8a8fd0,#7d82cc 60%,#5c5fa8)"></div>
<div class="a" style="left:0;top:991px;width:1280px;height:3px;background:#d8dcec"></div>
<div class="a" style="left:0;top:994px;width:1280px;height:30px;background:linear-gradient(#3b86f0 0%,#2f6fe8 6%,#2560e0 14%,#235ddc 50%,#2459d8 88%,#1c4cc0 100%)"></div>
<div class="a" style="left:0;top:994px;width:97px;height:30px;border-radius:0 10px 10px 0;background:radial-gradient(ellipse 60px 20px at 35px 15px,rgba(120,200,120,.35),transparent),linear-gradient(#6cc06c 0%,#48a848 12%,#3a9c3a 50%,#379437 85%,#2e7f2e 100%)"></div>
<svg style="left:10px;top:1000px" width="18" height="18" viewBox="0 0 18 18"><path d="M1 3 Q4 1 8 3 L7 8 Q4 6 1 8 Z" fill="#f05020"/><path d="M9 3 Q13 5 17 3 L16 8 Q12 10 8 8 Z" fill="#50c030"/><path d="M1 9 Q4 7 7 9 L6 14 Q3 12 0 14 Z" fill="#2080f0"/><path d="M8 9 Q12 11 16 9 L15 14 Q11 16 7 14 Z" fill="#f8c010"/></svg>
<div class="t" style="left:33px;top:999px;font-size:17px;line-height:20px;font-weight:bold;font-style:italic;color:#fff;text-shadow:1px 1px 1px #1a4a1a">start</div>
<svg style="left:108px;top:1001px" width="16" height="16" viewBox="0 0 16 16"><circle cx="8" cy="8.5" r="5.5" fill="none" stroke="#2a8ae8" stroke-width="3"/><path d="M3 8.5 H13" stroke="#2a8ae8" stroke-width="2"/><path d="M1 14 Q4 2 15 2" stroke="#f0c020" stroke-width="1.3" fill="none"/></svg>
<svg style="left:131px;top:1001px" width="16" height="16" viewBox="0 0 16 16"><rect x="1" y="1" width="11" height="8" fill="#80b0e0" stroke="#e8f0f8" stroke-width="1"/><rect x="5" y="6" width="10" height="8" fill="#c0d8f0" stroke="#e8f0f8" stroke-width="1"/></svg>
<svg style="left:155px;top:1001px" width="16" height="16" viewBox="0 0 16 16"><circle cx="8" cy="8" r="7" fill="#f07010"/><circle cx="9" cy="7" r="4" fill="#2850a0"/><path d="M2 5 Q6 2 9 5 Q6 6 6 10 Q3 10 2 5Z" fill="#f8a020"/></svg>
<div class="t" style="left:182px;top:996px;color:#c8d8f8;font-size:13px;font-weight:bold">»</div>
<div class="a" style="left:198px;top:997px;width:159px;height:24px;border-radius:3px;background:linear-gradient(#1a48b0,#1e50bc 20%,#1f52c0 80%,#2a5cc8);box-shadow:inset 1px 1px 1px #153a90"></div>
<svg style="left:207px;top:1001px" width="17" height="18" viewBox="0 0 17 18"><rect x="1.5" y="1.5" width="13" height="13" fill="url(#tg)" stroke="#101820" stroke-width="1.5"/><rect x="7.5" y="6.5" width="8.5" height="11" fill="#0a0a14" stroke="#101820"/><rect x="8" y="7.5" width="5" height="2.5" fill="#fff"/><rect x="8" y="15.5" width="6.5" height="1.5" fill="#f0f0e0"/><rect x="14" y="9.5" width="1.5" height="5" fill="#f0f0f0"/></svg>
<div class="t" style="left:229px;top:1003px;color:#fff">AxioVision LE - [SNAP...</div>
<div class="a" style="left:359px;top:997px;width:158px;height:24px;border-radius:3px;background:linear-gradient(#5a9af8,#3c80f0 15%,#3a7cec 80%,#2e6ee0);box-shadow:inset -1px -1px 1px #2050b0"></div>
<svg style="left:368px;top:1001px" width="14" height="16" viewBox="0 0 14 16"><path d="M2 3 L5 14 L9 14 L12 3 Z" fill="#d8a040"/><path d="M3 1 L5 9 M7 0 L7 9 M11 1 L9 9" stroke="#e04040" stroke-width="1.6"/><path d="M5 2 L6 9" stroke="#40b040" stroke-width="1.4"/></svg>
<div class="t" style="left:387px;top:1003px;color:#fff">Focus at 2 - Paint</div>
<svg style="left:979px;top:1001px" width="14" height="16" viewBox="0 0 14 16"><path d="M2 14 L8 7" stroke="#404060" stroke-width="2"/><ellipse cx="10" cy="4.5" rx="3" ry="4" transform="rotate(40 10 4.5)" fill="#a0a8b8" stroke="#303040" stroke-width="0.8"/></svg>
<svg style="left:998px;top:1002px" width="17" height="14" viewBox="0 0 17 14"><rect x="0.5" y="0.5" width="16" height="10" fill="#fff" stroke="#101830"/><path d="M3 4 h5 M3 7 h4" stroke="#203060" stroke-width="1.2"/><path d="M9 9 L14 3" stroke="#303040" stroke-width="2"/></svg>
<svg style="left:1020px;top:1001px" width="14" height="16" viewBox="0 0 14 16"><rect x="0.5" y="0.5" width="13" height="12" fill="#fffbe0" stroke="#202020"/><path d="M3 15 L5 12" stroke="#202020"/><text x="3.5" y="10.5" font-size="10" font-weight="bold" font-family="Liberation Sans" fill="#000">?</text></svg>
<svg style="left:1046px;top:1000px" width="10" height="18" viewBox="0 0 10 18"><rect x="1.5" y="0.5" width="6" height="4" fill="none" stroke="#fff"/><rect x="3.5" y="2.5" width="6" height="4" fill="#2560e0" stroke="#fff"/><path d="M2 11 H9 L5.5 15 Z" fill="#fff"/></svg>
<div class="t" style="left:1067px;top:1003px;color:#a8c4f0">Desktop</div>
<div class="t" style="left:1115px;top:996px;color:#c8d8f8;font-size:13px;font-weight:bold">»</div>
<div class="t" style="left:1132px;top:1003px;color:#a8c4f0">Links</div>
<div class="t" style="left:1165px;top:996px;color:#c8d8f8;font-size:13px;font-weight:bold">»</div>
<div class="a" style="left:1187px;top:994px;width:93px;height:30px;background:linear-gradient(#22a2f8 0%,#1392ee 10%,#0d8ae8 50%,#0f86e0 90%,#0a6ed0 100%);border-left:1px solid #1050b0;box-shadow:inset 1px 0 1px #60c0ff"></div>
<div class="a" style="left:1179px;top:1000px;width:18px;height:18px;border-radius:50%;background:radial-gradient(circle at 40% 35%,#8ad0ff,#2a88e8 60%,#1a60c0);border:1px solid #d0e8ff"></div>
<svg style="left:1184px;top:1004px" width="8" height="10"><path d="M6 1 L2 5 L6 9" stroke="#fff" stroke-width="2" fill="none"/></svg>
<svg style="left:1199px;top:1001px" width="16" height="16" viewBox="0 0 16 16"><rect x="0.5" y="0.5" width="15" height="15" rx="2" fill="#f0a030" stroke="#c07010"/><path d="M8 3 L13 5 Q13 11 8 14 Q3 11 3 5 Z" fill="#fff"/><path d="M8 4 V13 M4 8 H12" stroke="#e07020" stroke-width="1.5"/></svg>
<div class="t" style="left:1223px;top:1003px;color:#fff">6:59 PM</div>
<div class="a" style="left:854px;top:250px;width:240px;height:165px;background:#7e8ad8;border-radius:7px 7px 0 0;border:1px solid #6a70c0;border-top:none"></div>
<div class="a" style="left:854px;top:250px;width:240px;height:29px;border-radius:7px 7px 0 0;background:linear-gradient(#a8bcef 0%,#8ea6e8 8%,#7f98e2 30%,#7a94df 70%,#8aa3e6 92%,#97afec 100%)"></div>
<svg style="left:861px;top:258px" width="16" height="16" viewBox="0 0 16 16"><circle cx="5.5" cy="5.5" r="4.8" fill="#fff5ee" stroke="#e8a890" stroke-width="1"/><path d="M5.5 3 V5.5 H7.5" stroke="#d06040" stroke-width="1" fill="none"/><rect x="4" y="9" width="11" height="6" rx="1" fill="#6c7484" stroke="#3c4450" stroke-width="0.8"/><rect x="6" y="10.5" width="5" height="3" fill="#c8ccd8"/></svg>
<div class="t" style="left:880px;top:260px;font-weight:bold;font-size:13px;letter-spacing:-0.5px;color:#dde6f8">Exposure</div>
<div class="a" style="left:1069px;top:255px;width:21px;height:21px;border:1px solid #dfe4f6;border-radius:3px;background:linear-gradient(135deg,#dba0a6,#c27278 60%,#c68088)"></div>
<svg style="left:1073px;top:259px" width="13" height="13"><path d="M2 2 L11 11 M11 2 L2 11" stroke="#fff" stroke-width="2"/></svg>
<div class="a" style="left:857px;top:279px;width:235px;height:134px;background:#ece9d8"></div>
<div class="a" style="left:868px;top:304px;width:53px;height:22px;background:#fff;border:1px solid #939393"></div>
<div class="t" style="left:873px;top:307px">1.35 s</div>
<div class="a" style="left:868px;top:344px;width:53px;height:22px;background:#fff;border:1px solid #939393"></div>
<div class="t" style="left:873px;top:347px">62 %</div>
<svg style="left:926px;top:307px" width="22" height="17" viewBox="0 0 22 17"><path d="M1 8.5 L20 1 L20 16 Z" fill="#8a8a8a"/><path d="M1 8.5 L20 1" stroke="#c8c8c8" stroke-width="1"/></svg>
<svg style="left:1055px;top:307px" width="22" height="17" viewBox="0 0 22 17"><path d="M21 8.5 L2 1 L2 16 Z" fill="#8a8a8a"/><path d="M2 1 L2 16" stroke="#c8c8c8" stroke-width="1"/></svg>
<svg style="left:926px;top:348px" width="22" height="17" viewBox="0 0 22 17"><path d="M1 8.5 L20 1 L20 16 Z" fill="#8a8a8a"/><path d="M1 8.5 L20 1" stroke="#c8c8c8" stroke-width="1"/></svg>
<svg style="left:1055px;top:348px" width="22" height="17" viewBox="0 0 22 17"><path d="M21 8.5 L2 1 L2 16 Z" fill="#8a8a8a"/><path d="M2 1 L2 16" stroke="#c8c8c8" stroke-width="1"/></svg>
<div class="t" style="left:942px;top:291px">614us</div>
<div class="t" style="left:1032px;top:291px">600s</div>
<div class="t" style="left:942px;top:332px">5%</div>
<div class="t" style="left:1025px;top:332px">200%</div>
<div class="a" style="left:955px;top:307px;width:1px;height:3px;background:#000"></div><div class="a" style="left:960px;top:307px;width:1px;height:3px;background:#000"></div><div class="a" style="left:965px;top:307px;width:1px;height:3px;background:#000"></div><div class="a" style="left:970px;top:307px;width:1px;height:3px;background:#000"></div><div class="a" style="left:975px;top:307px;width:1px;height:3px;background:#000"></div><div class="a" style="left:980px;top:307px;width:1px;height:3px;background:#000"></div><div class="a" style="left:985px;top:307px;width:1px;height:3px;background:#000"></div><div class="a" style="left:990px;top:307px;width:1px;height:3px;background:#000"></div><div class="a" style="left:995px;top:307px;width:1px;height:3px;background:#000"></div><div class="a" style="left:1001px;top:307px;width:1px;height:3px;background:#000"></div><div class="a" style="left:1006px;top:307px;width:1px;height:3px;background:#000"></div><div class="a" style="left:1011px;top:307px;width:1px;height:3px;background:#000"></div><div class="a" style="left:1016px;top:307px;width:1px;height:3px;background:#000"></div><div class="a" style="left:1021px;top:307px;width:1px;height:3px;background:#000"></div><div class="a" style="left:1026px;top:307px;width:1px;height:3px;background:#000"></div><div class="a" style="left:1031px;top:307px;width:1px;height:3px;background:#000"></div><div class="a" style="left:1036px;top:307px;width:1px;height:3px;background:#000"></div><div class="a" style="left:1041px;top:307px;width:1px;height:3px;background:#000"></div>
<div class="a" style="left:952px;top:314px;width:91px;height:12px;background:#fff;border-top:2px solid #8a8778;border-left:1px solid #8a8778"></div>
<div class="a" style="left:955px;top:317px;width:44px;height:7px;background:#316ac5"></div>
<svg style="left:999px;top:310px" width="8" height="17" viewBox="0 0 8 17"><path d="M0.5 4 L3.5 0.8 L7.5 4 V16.5 H0.5 Z" fill="#f4f3ec" stroke="#a8a690" stroke-width="1"/><path d="M1.5 4.5 V15.5" stroke="#fff" stroke-width="1"/></svg>
<div class="a" style="left:955px;top:348px;width:1px;height:3px;background:#000"></div><div class="a" style="left:964px;top:348px;width:1px;height:3px;background:#000"></div><div class="a" style="left:972px;top:348px;width:1px;height:3px;background:#000"></div><div class="a" style="left:981px;top:348px;width:1px;height:3px;background:#000"></div><div class="a" style="left:989px;top:348px;width:1px;height:3px;background:#000"></div><div class="a" style="left:998px;top:348px;width:1px;height:3px;background:#000"></div><div class="a" style="left:1007px;top:348px;width:1px;height:3px;background:#000"></div><div class="a" style="left:1015px;top:348px;width:1px;height:3px;background:#000"></div><div class="a" style="left:1024px;top:348px;width:1px;height:3px;background:#000"></div><div class="a" style="left:1032px;top:348px;width:1px;height:3px;background:#000"></div><div class="a" style="left:1041px;top:348px;width:1px;height:3px;background:#000"></div>
<div class="a" style="left:952px;top:355px;width:91px;height:12px;background:#fff;border-top:2px solid #8a8778;border-left:1px solid #8a8778"></div>
<div class="a" style="left:955px;top:358px;width:22px;height:7px;background:#316ac5"></div>
<svg style="left:977px;top:351px" width="8" height="17" viewBox="0 0 8 17"><path d="M0.5 4 L3.5 0.8 L7.5 4 V16.5 H0.5 Z" fill="#f4f3ec" stroke="#a8a690" stroke-width="1"/><path d="M1.5 4.5 V15.5" stroke="#fff" stroke-width="1"/></svg>
<div class="a" style="left:869px;top:376px;width:52px;height:21px;border:1px solid #1c2c40;border-radius:3px;background:linear-gradient(#fff,#f4f3ee 60%,#dcd9cc)"></div>
<div class="t" style="left:873px;top:381px">Measure</div>
<div class="a" style="left:930px;top:381px;width:13px;height:13px;border:1px solid #1c5180;background:linear-gradient(135deg,#dcdcd7,#fff)"></div>
<div class="t" style="left:945px;top:381px">Auto Snap</div>
<div class="a" style="left:1009px;top:381px;width:13px;height:13px;border:1px solid #1c5180;background:linear-gradient(135deg,#dcdcd7,#fff)"></div>
<div class="t" style="left:1024px;top:381px">Auto Live</div>
</body></html>
